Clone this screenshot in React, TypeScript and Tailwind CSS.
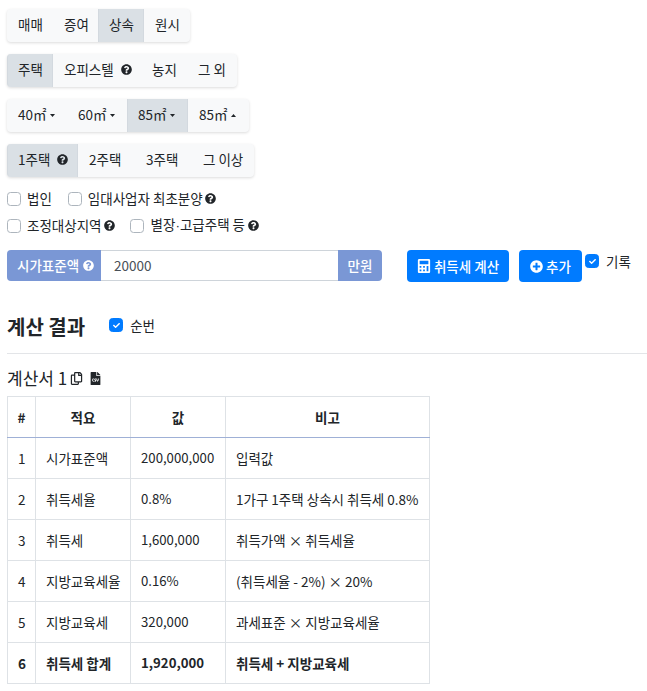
import React from 'react';
import { FaCalculator, FaCheck, FaFileCsv, FaPlusCircle, FaQuestionCircle, FaRegCopy } from 'react-icons/fa';

type Opt = { label: React.ReactNode; width: string; active?: boolean };

const Help = ({ className = 'text-[#212529]' }: { className?: string }) => (
  <FaQuestionCircle size={11} className={`inline-block shrink-0 ${className}`} />
);

function BtnGroup({ items, className }: { items: Opt[]; className: string }) {
  return (
    <div className={`flex h-[33px] w-fit rounded-[4px] bg-[#f8f9fa] shadow-[0_1px_3px_rgba(0,0,0,0.14)] ${className}`}>
      {items.map((item, i) => (
        <div
          key={i}
          className={`flex items-center gap-[7px] pb-[2px] first:rounded-l-[4px] ${item.width} ${item.active ? 'bg-[#dae0e5] border-x border-[#d3d9df] pl-[10px]' : 'pl-[11px]'}`}
        >
          {item.label}
        </div>
      ))}
    </div>
  );
}

function Check({ on, className = '' }: { on?: boolean; className?: string }) {
  return (
    <span
      className={`flex h-[14px] w-[14px] shrink-0 items-center justify-center rounded-[3.5px] border ${on ? 'border-[#007bff] bg-[#007bff]' : 'border-[#adb5bd] bg-white'} ${className}`}
    >
      {on && <FaCheck size={7} className="text-white" />}
    </span>
  );
}

const Area = ({ n, up }: { n: string; up?: boolean }) => (
  <span className="flex items-center gap-[3px]">
    {n}㎡
    <svg width="5" height="3" viewBox="0 0 5 3" className="mt-[1px] fill-current">
      <polygon points={up ? '2.5,0 5,3 0,3' : '0,0 5,0 2.5,3'} />
    </svg>
  </span>
);

const rows = [
  ['1', '시가표준액', '200,000,000', '입력값'],
  ['2', '취득세율', '0.8%', '1가구 1주택 상속시 취득세 0.8%'],
  ['3', '취득세', '1,600,000', '취득가액 × 취득세율'],
  ['4', '지방교육세율', '0.16%', '(취득세율 - 2%) × 20%'],
  ['5', '지방교육세', '320,000', '과세표준 × 지방교육세율'],
  ['6', '취득세 합계', '1,920,000', '취득세 + 지방교육세'],
];

export default function App() {
  return (
    <div className="min-h-[691px] bg-white pl-[7px] pt-[9px] text-[13.5px] text-[#212529] font-['Noto_Sans_CJK_KR','Noto_Sans',sans-serif]">
      <BtnGroup
        className="mb-[12px]"
        items={[
          { label: '매매', width: 'w-[46px]' },
          { label: '증여', width: 'w-[45px]' },
          { label: '상속', width: 'w-[46px]', active: true },
          { label: '원시', width: 'w-[46px]' },
        ]}
      />
      <BtnGroup
        className="mb-[12px]"
        items={[
          { label: '주택', width: 'w-[46px]', active: true },
          { label: <>오피스텔 <Help /></>, width: 'w-[88px]' },
          { label: '농지', width: 'w-[46px]' },
          { label: '그 외', width: 'w-[50px]' },
        ]}
      />
      <BtnGroup
        className="mb-[12px]"
        items={[
          { label: <Area n="40" />, width: 'w-[60px]' },
          { label: <Area n="60" />, width: 'w-[60px]' },
          { label: <Area n="85" />, width: 'w-[61px]', active: true },
          { label: <Area n="85" up />, width: 'w-[61px]' },
        ]}
      />
      <BtnGroup
        className="mb-[8px]"
        items={[
          { label: <>1주택 <Help /></>, width: 'w-[71px]', active: true },
          { label: '2주택', width: 'w-[57px]' },
          { label: '3주택', width: 'w-[57px]' },
          { label: '그 이상', width: 'w-[62px]' },
        ]}
      />

      <div className="flex h-[27px] items-center">
        <Check />
        <span className="ml-[6px]">법인</span>
        <Check className="ml-[16px]" />
        <span className="ml-[6px]">임대사업자 최초분양</span>
        <span className="ml-[2px] flex"><Help /></span>
      </div>
      <div className="flex h-[27px] items-center">
        <Check />
        <span className="ml-[6px]">조정대상지역</span>
        <span className="ml-[2px] flex"><Help /></span>
        <Check className="ml-[15px]" />
        <span className="ml-[7px]">별장<span className="font-['Liberation_Sans']">·</span>고급주택 등</span>
        <span className="ml-[3px] flex"><Help /></span>
      </div>

      <div className="mt-[11px] flex items-start">
        <div className="flex h-[31px] w-[375px]">
          <div className="flex w-[94px] items-center gap-[4px] rounded-l-[4px] bg-[#7a97d5] pl-[10px] font-medium text-white">
            시가표준액 <Help className="text-white" />
          </div>
          <div className="flex flex-1 items-center border-y border-[#ced4da] bg-white pl-[13px] text-[#495057]">20000</div>
          <div className="flex w-[44px] items-center justify-center rounded-r-[4px] bg-[#7a97d5] font-medium text-white">만원</div>
        </div>
        <div className="ml-[25px] flex h-[32px] w-[102px] items-center justify-center gap-[3px] rounded-[4px] bg-[#007bff] font-medium text-white">
          <FaCalculator size={14} />
          취득세 계산
        </div>
        <div className="ml-[10px] flex h-[32px] w-[63px] items-center justify-center gap-[3px] rounded-[4px] bg-[#007bff] font-medium text-white">
          <FaPlusCircle size={13} />
          추가
        </div>
        <div className="ml-[3px] mt-[1px] flex items-center gap-[7px]">
          <Check on />
          기록
        </div>
      </div>

      <div className="mt-[28px] flex items-center">
        <h2 className="text-[20px] font-bold leading-[34px]">계산 결과</h2>
        <Check on className="mb-[4px] ml-[24px]" />
        <span className="mb-[4px] ml-[7px]">순번</span>
      </div>
      <hr className="mt-[9px] border-[#e3e5e8]" />

      <div className="mt-[11px] flex h-[26px] items-center text-[17px]">
        계산서 1
        <FaRegCopy size={13} className="ml-[3px]" />
        <FaFileCsv size={13} className="ml-[6px]" />
      </div>

      <table className="mt-[5px] w-[423px] table-fixed border-collapse whitespace-nowrap">
        <colgroup>
          <col className="w-[28px]" />
          <col className="w-[95px]" />
          <col className="w-[95px]" />
          <col />
        </colgroup>
        <thead>
          <tr className="h-[41px] font-bold">
            {['#', '적요', '값', '비고'].map((h, i) => (
              <th key={i} className="border border-b-[#9fb0d6] border-[#dee2e6] text-center font-bold">{h}</th>
            ))}
          </tr>
        </thead>
        <tbody>
          {rows.map((row, i) => (
            <tr key={row[0]} className={`h-[41px] ${i === 5 ? 'font-bold' : ''}`}>
              <td className="border border-[#dee2e6] px-[10px]">{row[0]}</td>
              <td className="border border-[#dee2e6] px-[10px]">{row[1]}</td>
              <td className="border border-[#dee2e6] px-[10px] text-[13.2px]">{row[2]}</td>
              <td className="border border-[#dee2e6] px-[10px]">{row[3]}</td>
            </tr>
          ))}
        </tbody>
      </table>
    </div>
  );
}
